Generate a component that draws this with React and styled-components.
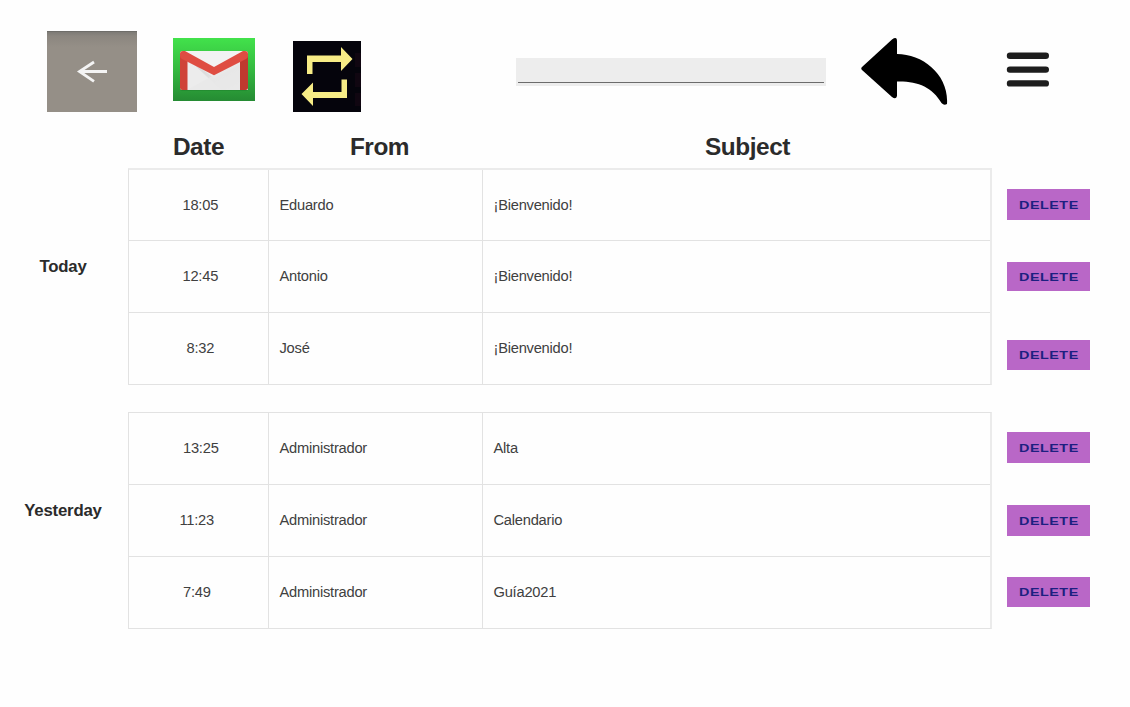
import React from "react";
import styled, { createGlobalStyle } from "styled-components";

const GlobalStyle = createGlobalStyle`
  * { box-sizing: border-box; }
  body {
    margin: 0;
    background: #fefefe;
    color: #2b2b2b;
    font-family: "Liberation Sans", Arial, sans-serif;
    overflow: hidden;
  }
`;

const Page = styled.main`
  width: 1130px;
  height: 707px;
`;

const Toolbar = styled.header`
  display: flex;
  align-items: flex-start;
  height: 132px;
  padding: 31px 0 0 47px;
`;

const IconButton = styled.button`
  flex: none;
  display: block;
  width: ${(p) => p.$w}px;
  height: ${(p) => p.$h}px;
  margin: ${(p) => p.$top || 0}px ${(p) => p.$gap || 0}px 0 0;
  padding: 0;
  border: 0;
  background: none;
  svg { display: block; }
`;

const BackButton = styled(IconButton)`
  background: linear-gradient(#666562 0, #7f7c77 1.5px, #8b867f 5px, #958f87 16px);
`;

const SearchBox = styled.label`
  flex: none;
  width: 310px;
  height: 28px;
  margin: 27px 35px 0 0;
  padding: 0 2px 3px;
  background: #ededed;
`;

const SearchInput = styled.input`
  display: block;
  width: 100%;
  height: 25px;
  padding: 0 6px;
  border: 0;
  border-bottom: 1px solid #6c6c6c;
  outline: 0;
  background: transparent;
  font: inherit;
`;

const Headings = styled.div`
  display: grid;
  grid-template-columns: 141px 221px 515px;
  height: 36px;
  padding-left: 128px;
`;

const Heading = styled.h2`
  margin: 0;
  font-size: 24.4px;
  letter-spacing: -0.45px;
  line-height: 30px;
  text-align: center;
`;

const Section = styled.section`
  display: grid;
  grid-template-columns: 128px 864px 15px 83px;
  margin-bottom: 27px;
`;

const DayLabel = styled.h3`
  margin: 0;
  padding: 89px 2px 0 0;
  font-size: 16.8px;
  letter-spacing: -0.2px;
  line-height: 20px;
  text-align: center;
`;

const Table = styled.div`
  height: 217px;
  border: 1px solid #e2e2e2;
  border-top: ${(p) => (p.$softTop ? "2px solid #ebebeb" : "1px solid #e2e2e2")};
  border-right: 2px solid #ebebeb;
`;

const Row = styled.div`
  display: grid;
  grid-template-columns: 140px 214px 1fr;
  height: ${(p) => p.$h}px;
  border-bottom: 1px solid #e2e2e2;
  &:last-child { border-bottom: 0; }
`;

const Cell = styled.div`
  display: flex;
  align-items: center;
  padding-left: ${(p) => p.$indent || 10.5}px;
  border-right: 1px solid #e2e2e2;
  font-size: 14.7px;
  letter-spacing: -0.24px;
  line-height: 17px;
  color: #404040;
  white-space: nowrap;
  &:last-child { border-right: 0; }
`;

const Actions = styled.div`
  grid-column: 4;
`;

const DeleteButton = styled.button`
  display: flex;
  align-items: center;
  justify-content: center;
  width: 83px;
  height: ${(p) => p.$h}px;
  margin: ${(p) => p.$gap}px 0 0;
  padding: ${(p) => (p.$h % 2 ? 1 : 0)}px 0 0;
  border: 0;
  background: #b967c7;
  color: #1d1f80;
  font: bold 11.5px "Liberation Sans", Arial, sans-serif;
`;

const DeleteText = styled.span`
  letter-spacing: 0.4px;
  line-height: 13px;
  transform: scaleX(1.25);
`;

const BackIcon = () => (
  <svg width="90" height="81" viewBox="0 0 90 81" fill="none" stroke="#f4f4f4" strokeWidth="2.8">
    <path d="M60 40.5H33M47 31L32.5 40.5L47 50.3" />
  </svg>
);

const MailIcon = () => (
  <svg width="82" height="63" viewBox="0 0 82 63">
    <defs>
      <linearGradient id="green" x1="0" y1="0" x2="0" y2="1">
        <stop offset="0" stopColor="#42e24b" />
        <stop offset="0.5" stopColor="#34b940" />
        <stop offset="1" stopColor="#258b33" />
      </linearGradient>
      <linearGradient id="fold" x1="0" y1="0" x2="1" y2="1">
        <stop offset="0" stopColor="#d4d4d4" />
        <stop offset="1" stopColor="#ececec" />
      </linearGradient>
    </defs>
    <path fill="url(#green)" d="M0 0H82V63H0Z" />
    <rect x="7" y="14" width="68" height="39" rx="2.5" fill="#1e7f2b" opacity=".5" />
    <rect x="7" y="13" width="68" height="39" rx="2.5" fill="#ececec" />
    <path fill="url(#fold)" d="M14 20L48 52H75V22L41 40Z" />
    <path fill="#e9e9e9" d="M14 52L41 37L67 21V52Z" opacity=".8" />
    <path fill="#f2f2f2" d="M11 13H71L41 30Z" />
    <path fill="#cf4338" d="M7 17L14.5 23V52H9.5Q7 52 7 49.5Z" />
    <path fill="#c0392f" d="M75 17L67 23V52H72.5Q75 52 75 49.5Z" />
    <path fill="#df4d42" d="M7 18V16Q7 13 10 13H12L41 29L70 13H72Q75 13 75 16V18Q75 20 73 21L41 37.3L9 21Q7 20 7 18Z" />
  </svg>
);

const RepeatIcon = () => (
  <svg width="68" height="71" viewBox="0 0 68 71">
    <path fill="#05040c" d="M0 0H68V71H0Z" />
    <path fill="#100611" d="M62 12H68V26H62ZM62 32H68V46H62ZM62 52H68V65H62Z" />
    <path
      fill="#f7ec86"
      d="M14 33V14.5H48V6L59.5 18L48 30V21H19.5V33ZM54 38.5V57H20V65L8.5 53L20 41.5V51H48.5V38.5Z"
    />
  </svg>
);

const ReplyIcon = () => (
  <svg width="88" height="69" viewBox="0 0 88 69">
    <path d="M1 30L31 2.5Q36 -1 36 4V17C62 17 88 38 86 67Q83 69 80.5 66C71 50 57 44 36 44.5V59Q35 63 31 60L1 33Q-.5 31.5 1 30Z" />
  </svg>
);

const MenuIcon = () => (
  <svg width="44" height="36" viewBox="0 0 44 36" stroke="#1d1d1d" strokeWidth="6.4" strokeLinecap="round">
    <path d="M4 3.8H39.8M4 17.6H39.8M4 31.4H39.8" />
  </svg>
);

const days = [
  {
    label: "Today",
    softTop: true,
    rows: [
      { h: 71, time: "18:05", indent: 53.5, from: "Eduardo", subject: "¡Bienvenido!", gap: 21, bh: 31 },
      { h: 72, time: "12:45", indent: 53.5, from: "Antonio", subject: "¡Bienvenido!", gap: 42, bh: 29 },
      { h: 71, time: "8:32", indent: 57.5, from: "José", subject: "¡Bienvenido!", gap: 49, bh: 30 },
    ],
  },
  {
    label: "Yesterday",
    rows: [
      { h: 72, time: "13:25", indent: 54, from: "Administrador", subject: "Alta", gap: 20, bh: 31 },
      { h: 72, time: "11:23", indent: 50.5, from: "Administrador", subject: "Calendario", gap: 42, bh: 31 },
      { h: 71, time: "7:49", indent: 54, from: "Administrador", subject: "Guía2021", gap: 41, bh: 30 },
    ],
  },
];

export default function App() {
  return (
    <Page>
      <GlobalStyle />
      <Toolbar>
        <BackButton $w={90} $h={81} $gap={36} aria-label="Back"><BackIcon /></BackButton>
        <IconButton $w={82} $h={63} $top={7} $gap={38} aria-label="Mail"><MailIcon /></IconButton>
        <IconButton $w={68} $h={71} $top={10} $gap={155} aria-label="Refresh"><RepeatIcon /></IconButton>
        <SearchBox><SearchInput aria-label="Search" /></SearchBox>
        <IconButton $w={88} $h={69} $top={6} $gap={57} aria-label="Reply"><ReplyIcon /></IconButton>
        <IconButton $w={44} $h={36} $top={21} aria-label="Menu"><MenuIcon /></IconButton>
      </Toolbar>
      <Headings>
        <Heading>Date</Heading>
        <Heading>From</Heading>
        <Heading>Subject</Heading>
      </Headings>
      {days.map((day) => (
        <Section key={day.label}>
          <DayLabel>{day.label}</DayLabel>
          <Table $softTop={day.softTop}>
            {day.rows.map((row) => (
              <Row key={row.time} $h={row.h}>
                <Cell $indent={row.indent}>{row.time}</Cell>
                <Cell>{row.from}</Cell>
                <Cell>{row.subject}</Cell>
              </Row>
            ))}
          </Table>
          <Actions>
            {day.rows.map((row) => (
              <DeleteButton key={row.time} $h={row.bh} $gap={row.gap}>
                <DeleteText>DELETE</DeleteText>
              </DeleteButton>
            ))}
          </Actions>
        </Section>
      ))}
    </Page>
  );
}
